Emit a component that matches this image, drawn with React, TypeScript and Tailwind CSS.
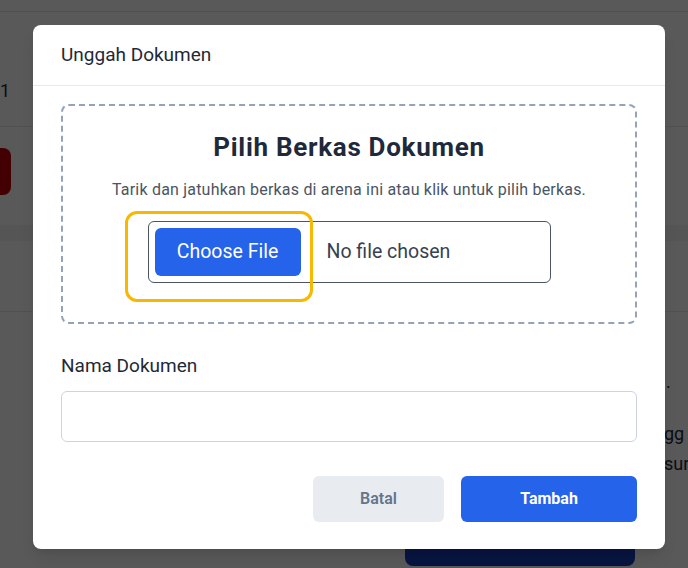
export default function App() {
  return (
    <div className="relative h-[568px] w-[688px] overflow-hidden bg-white font-['Roboto',sans-serif]">
      {/* page behind the dialog */}
      <div className="flex flex-col">
        <div className="h-[12px] border-b border-gray-200" />
        <div className="flex h-[115px] items-end border-b border-gray-200 pb-[22px]">
          <span className="text-[18px] text-gray-800">1</span>
        </div>
        <div className="h-[98px] pt-[21px]">
          <div className="-ml-[60px] h-[47px] w-[71px] rounded-lg bg-red-700" />
        </div>
        <div className="h-[16px] bg-gray-100" />
        <div className="h-[71px] border-b border-gray-200" />
        <div className="flex justify-end pt-[56px]">
          <div className="w-[24px] text-[18px] leading-[28px] text-gray-800 whitespace-nowrap">
            <p className="pl-[2px]">.</p>
            <p className="mt-[24px]">gg</p>
            <p className="mt-[2px]">sur</p>
          </div>
        </div>
        <div className="mt-[48px] ml-[405px] h-[40px] w-[230px] rounded-lg bg-blue-800" />
      </div>

      {/* overlay */}
      <div className="absolute inset-0 bg-black/65">
        <div className="ml-[33px] mt-[25px] w-[632px] rounded-lg bg-white shadow-lg">
          <div className="flex h-[61px] items-center border-b border-[#e5eaf0] px-[28px] text-[19px] text-[#1f2937]">
            Unggah Dokumen
          </div>
          <div className="px-[28px] pt-[18px] pb-[27px]">
            <div className="flex h-[220px] flex-col items-center rounded-lg border-2 border-dashed border-[#94a3b8] pt-[24px]">
              <h2 className="text-[26px] leading-[34px] font-bold tracking-[0.7px] text-[#1e293b]">Pilih Berkas Dokumen</h2>
              <p className="mt-[15px] text-[16px] leading-[22px] tracking-[0.2px] text-[#4b5563]">
                Tarik dan jatuhkan berkas di arena ini atau klik untuk pilih berkas.
              </p>
              <div className="relative mt-[20px] flex h-[62px] w-[403px] items-center rounded-md border border-[#4b5563] pl-[6px]">
                <div className="flex h-[48px] w-[146px] items-center justify-center rounded-md bg-[#2563eb] text-[19.5px] text-white">
                  Choose File
                </div>
                <span className="ml-[26px] text-[19.5px] text-[#374151]">No file chosen</span>
                <div className="absolute -left-[24px] -top-[11px] h-[91px] w-[188px] rounded-xl border-[3px] border-[#f8b800]" />
              </div>
            </div>

            <label className="mt-[29px] block text-[19px] leading-[26px] text-[#1f2937]">Nama Dokumen</label>
            <input type="text" className="mt-[12px] block h-[51px] w-full rounded-md border border-[#cbd5e1] px-3 outline-none" />

            <div className="mt-[34px] flex justify-end gap-[17px]">
              <button className="h-[46px] w-[131px] rounded-md bg-[#e8ecf1] text-[16px] font-semibold text-[#64748b]">Batal</button>
              <button className="h-[46px] w-[176px] rounded-md bg-[#2563eb] text-[16px] font-bold text-white">Tambah</button>
            </div>
          </div>
        </div>
      </div>
    </div>
  );
}
